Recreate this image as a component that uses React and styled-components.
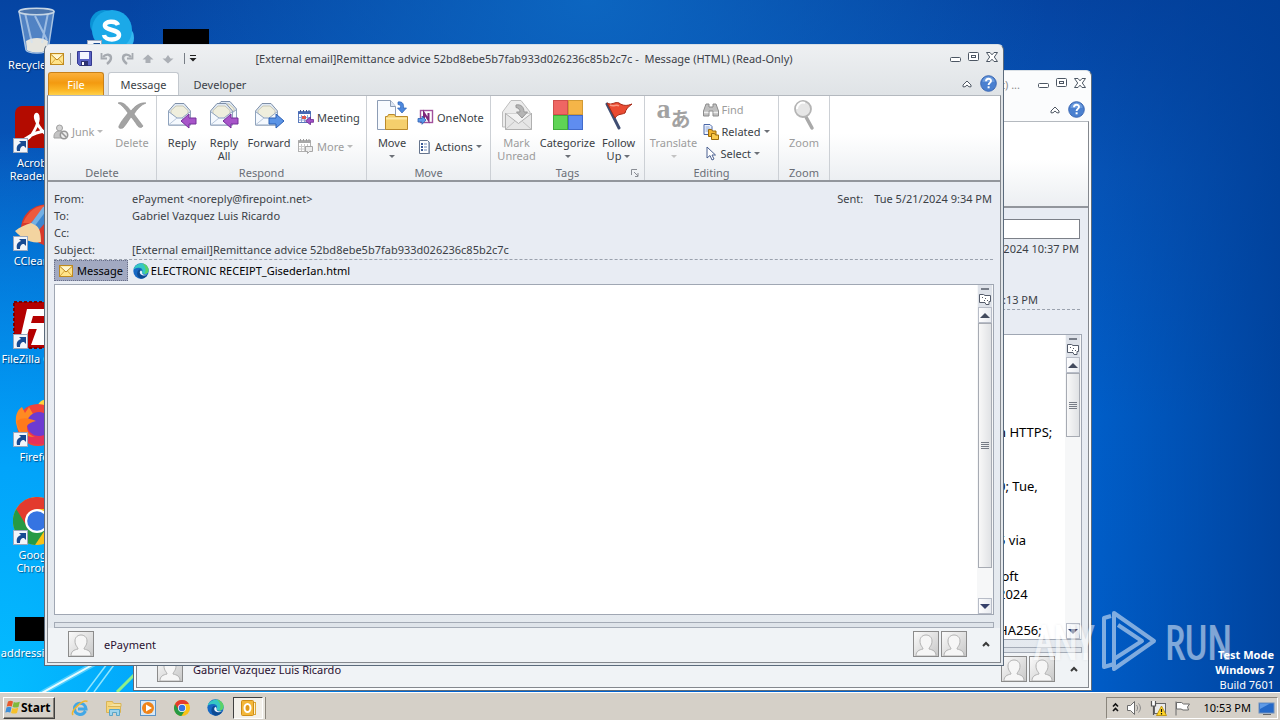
import React from 'react';
import styled, { createGlobalStyle } from 'styled-components';

const COLORS = {
  text: '#3b3f46',
  muted: '#9c9c9c',
  group: '#6a6e76',
  line: '#84888e',
  panel: '#e8ecf3',
  taskbar: '#d5d0c8',
};

const FONT = `'Noto Sans', 'Liberation Sans', sans-serif`;

const GlobalStyle = createGlobalStyle`
  * { box-sizing: border-box; }
  body { margin: 0; font-family: ${FONT}; font-size: 11px; color: ${COLORS.text}; overflow: hidden; }
  button, input { font: inherit; color: inherit; }
  button { padding: 0; border: 0; background: none; white-space: nowrap; }
  svg { display: block; flex: none; }
`;

/* ---------- icons ---------- */

const Envelope = () => (
  <svg width="14" height="12" viewBox="0 0 14 12">
    <rect x=".5" y=".5" width="13" height="11" fill="#ffe48a" stroke="#c08a1e" />
    <path d="M1 11l4.500-5M13 11L8.500 6" stroke="#d9a63a" fill="none" />
    <path d="M1 1.500l6 5.500 6-5.500" fill="#fff6d2" stroke="#b9841c" />
  </svg>
);

const Save = () => (
  <svg width="15" height="15" viewBox="0 0 15 15">
    <path d="M.5 .5h14v14h-12l-2-2z" fill="#5a62c4" stroke="#34398f" />
    <rect x="3" y="1" width="9" height="7" fill="#f4f6ff" />
    <rect x="4" y="10" width="7" height="5" fill="#2e3270" />
    <rect x="5" y="11" width="2" height="3" fill="#fff" />
  </svg>
);

const Undo = ({ flip }) => (
  <svg width="13" height="13" viewBox="0 0 13 13">
    <g transform={flip ? 'translate(13 0) scale(-1 1)' : undefined} fill="none" stroke="#a6aab0">
      <path d="M3 5C6 1.500 11 2 11 6c0 3-2 4.500-4 6" strokeWidth="2.400" />
      <path d="M1.500 1v5.500h5.500" strokeWidth="1.800" />
    </g>
  </svg>
);

const Diamond = ({ down }) => (
  <svg width="12" height="10" viewBox="0 0 12 10">
    <path
      d={down ? 'M6 9.500L.5 4.500h3L6 1l2.500 3.500h3z' : 'M6 .5l5.500 5h-3V9h-5V5.500h-3z'}
      fill="#abafb5"
    />
  </svg>
);

const Caret = ({ color = '#6c7077', size = 6 }) => (
  <svg width={size} height="3" viewBox="0 0 6 3"><path d="M0 0h6L3 3z" fill={color} /></svg>
);

const Customize = () => (
  <svg width="8" height="7" viewBox="0 0 8 7"><path d="M1 0h6v1H1zM.5 3h7L4 6.500z" fill="#222" /></svg>
);

const Minimize = () => (
  <svg width="11" height="12" viewBox="0 0 11 12"><rect x=".5" y="6.500" width="10" height="4" rx="1" fill="#fff" stroke="#4c5663" /></svg>
);

const Maximize = () => (
  <svg width="11" height="12" viewBox="0 0 11 12">
    <rect x=".5" y="1.500" width="10" height="8" rx="1" fill="#fff" stroke="#4c5663" />
    <rect x="3.500" y="4.500" width="4" height="2" fill="none" stroke="#4c5663" />
  </svg>
);

const CloseX = () => (
  <svg width="12" height="12" viewBox="0 0 12 12">
    <path d="M.5 1.500h3.500L6 3.800 8 1.500h3.500L8.300 6l3.200 4.500H8L6 8.200 4 10.500H.5L3.700 6z" fill="#fff" stroke="#4c5663" />
  </svg>
);

const Collapse = () => (
  <svg width="10" height="8" viewBox="0 0 10 8"><path d="M5 1l4 4v1.800H7L5 5 3 6.800H1V5z" fill="#fff" stroke="#4f5864" /></svg>
);

const Help = () => (
  <svg width="17" height="17" viewBox="0 0 17 17">
    <circle cx="8.500" cy="8.500" r="7.800" fill="#4a80d0" stroke="#3c68b3" />
    <path d="M2.500 7a6 5.500 0 0 1 12 0z" fill="#7ba6e3" opacity=".7" />
    <path d="M6 6.300c0-3.300 5-3.300 5-.3 0 1.900-2.400 1.900-2.400 4" fill="none" stroke="#fff" strokeWidth="1.900" />
    <rect x="7.600" y="11.300" width="2" height="2" fill="#fff" />
  </svg>
);

const Junk = () => (
  <svg width="16" height="16" viewBox="0 0 16 16">
    <circle cx="6.500" cy="4" r="3" fill="#d4d4d4" stroke="#9f9f9f" />
    <path d="M1 14c-.5-5 2-7 5.500-7s5 2 5 7z" fill="#c4c4c4" stroke="#a2a2a2" />
    <circle cx="11" cy="11" r="3.700" fill="#eee" stroke="#979797" strokeWidth="1.600" />
    <path d="M8.500 8.500l5 5" stroke="#979797" strokeWidth="1.600" />
  </svg>
);

const DeleteX = () => (
  <svg width="32" height="32" viewBox="0 0 32 32">
    <path d="M2 4c5-2 9 3 13 8 4-5 9-9 15-8-5 2-9 6-12 11 3 4 6 8 9 12-2 3-5 1-6-1-2-3-4-6-6-8-3 4-5 8-8 11-3 1-5 0-4-2 2-5 6-9 9-13C9 10 6 6 2 4z" fill="#a3a3a3" stroke="#8d8d8d" strokeWidth=".6" />
  </svg>
);

const OpenMail = ({ x = 0, y = 0 }) => (
  <g transform={`translate(${x} ${y})`} strokeLinejoin="round">
    <path d="M.5 9L7 1.500h9L22.500 9v14H.5z" fill="#dfe9f5" stroke="#7f90a8" />
    <path d="M3 13V8.500l5-4.500h7l5 4.500V13l-6 4H9z" fill="#efeedd" stroke="#c9c7b4" />
    <path d="M.5 9.500L9 16h5l8.500-6.500V23H.5z" fill="#f5f9fe" stroke="#8fa3bd" />
    <path d="M1 22.500l8-6.500h5l8 6.500" fill="none" stroke="#b9c8dc" />
  </g>
);

const Reply = ({ all, forward }) => (
  <svg width="32" height="32" viewBox="0 0 32 32">
    {all && <OpenMail x={6} y={1} />}
    <OpenMail x={2} y={3} />
    {forward ? (
      <path d="M16 19h7v-4l8 7-8 7v-4h-7z" fill="#5b94e6" stroke="#2d60b3" />
    ) : (
      <path d="M30 19h-7v-4l-8 7 8 7v-4h7z" fill="#a855c9" stroke="#75309a" />
    )}
  </svg>
);

const Meeting = ({ grey }) => (
  <svg width="17" height="16" viewBox="0 0 17 16">
    <rect x="1.500" y="2.500" width="12" height="11" fill="#fff" stroke={grey ? '#b0b0b0' : '#5b7bbd'} />
    <path d="M1 4h13" stroke={grey ? '#a8a8a8' : '#4769b5'} strokeWidth="2" />
    <path d="M3.500 1v2M6.500 1v2M9.500 1v2M12 1v2" stroke={grey ? '#999' : '#3c5390'} />
    <path d="M4.500 6v7M7.500 6v7M10.500 6v7M2 8.500h11M2 11h11" stroke={grey ? '#cacaca' : '#8fa8d8'} />
    {grey ? (
      <path d="M8.500 8.500h7v5h-3l-2 2v-2h-2z" fill="#ececec" stroke="#a6a6a6" />
    ) : (
      <>
        <rect x="5" y="7" width="4" height="3" fill="#e2574b" />
        <path d="M16.500 10.500h-3V8l-5 4 5 3.800v-2.500h3z" fill="#a04fc4" stroke="#6d2d92" strokeWidth=".8" />
      </>
    )}
  </svg>
);

const Move = () => (
  <svg width="32" height="32" viewBox="0 0 32 32">
    <path d="M1.500 1.500h13l5 6v23h-18z" fill="#f8fbff" stroke="#8d9db5" />
    <path d="M14.500 1.500v6h5" fill="#dce6f3" stroke="#8d9db5" />
    <path d="M22 3c5-1 6 3 5.500 6h3l-4.500 5-4.500-5h3c.5-2-.5-3.500-2.500-3.500z" fill="#4d88de" stroke="#2c62b5" strokeWidth=".7" />
    <path d="M9.500 30.500v-13h2l1-2h6l1 2h12v13z" fill="#f5cf6c" stroke="#bb8a2b" />
    <path d="M10 19.500h21" stroke="#fdeaa9" strokeWidth="2" />
  </svg>
);

const OneNote = () => (
  <svg width="17" height="16" viewBox="0 0 17 16">
    <rect x="3.500" y="1.500" width="12" height="12" fill="#fff" stroke="#a2519c" strokeWidth="1.400" />
    <path d="M7 11V4l4.500 7V4" fill="none" stroke="#80267a" strokeWidth="2" />
    <path d="M1 9.500h4V7l4 4-4 4.300V13H1z" fill="#5c97e8" stroke="#2d5fae" strokeWidth=".8" />
  </svg>
);

const Actions = () => (
  <svg width="15" height="15" viewBox="0 0 15 15">
    <path d="M2.500 1.500h8l2 2v11h-10z" fill="#fff" stroke="#66758d" />
    <path d="M12 3v11.500" stroke="#8999b3" strokeWidth="1.500" />
    <rect x="4" y="4" width="2" height="2" fill="#3c5b96" />
    <rect x="4" y="7" width="2" height="2" fill="#3c5b96" />
    <rect x="4" y="10" width="2" height="2" fill="#3c5b96" />
    <path d="M7 5h3M7 8h3M7 11h3" stroke="#6f89b8" />
  </svg>
);

const MarkUnread = () => (
  <svg width="32" height="32" viewBox="0 0 32 32">
    <path d="M1.500 13L10 1.500h10L29 13v15h-27.500z" fill="#ececec" stroke="#bebebe" />
    <rect x="4.500" y="14.500" width="26" height="16" fill="#e6e6e6" stroke="#b0b0b0" />
    <path d="M4.500 30.500l9-8M30.500 30.500l-9-8" stroke="#c2c2c2" />
    <path d="M4.500 14.500l13 10 13-10" fill="#f3f3f3" stroke="#b0b0b0" />
    <path d="M15 6c5-1 8 2 8 7h3.500L21 19l-5.500-6H19c0-2-1-4-4-4.500z" fill="#b5b5b5" stroke="#979797" />
  </svg>
);

const Categorize = () => (
  <svg width="32" height="32" viewBox="0 0 32 32">
    <rect x="1.500" y="1.500" width="14" height="14" fill="#ef6663" stroke="#d0504d" />
    <rect x="16.500" y="1.500" width="14" height="14" fill="#f5b548" stroke="#d29a35" />
    <rect x="1.500" y="16.500" width="14" height="14" fill="#5fd455" stroke="#41ac3a" />
    <rect x="16.500" y="16.500" width="14" height="14" fill="#5f8df0" stroke="#426bcb" />
  </svg>
);

const Flag = () => (
  <svg width="32" height="32" viewBox="0 0 32 32">
    <path d="M4 5l12 24" stroke="#3f4e72" strokeWidth="3" strokeLinecap="round" />
    <path d="M4 4c5 3 8-2 12 0 4 3 8 3 13 1-4 3-6 5-7 9-4 2-6 0-10 5z" fill="#ea4b32" stroke="#a52a18" />
    <path d="M7 6c4 2 6-1 9 1" stroke="#f99a84" strokeWidth="1.500" fill="none" />
  </svg>
);

const LauncherIcon = () => (
  <svg width="8" height="8" viewBox="0 0 8 8"><path d="M.5 6V.5H6M3 3l4 4M7 4v3.500H4" fill="none" stroke="#8a8e95" /></svg>
);

const Find = () => (
  <svg width="16" height="14" viewBox="0 0 16 14">
    <path d="M3 1h3v3h4V1h3l2.500 7v5H10V8H6v5H.5V8z" fill="#bfbfbf" stroke="#8c8c8c" />
    <path d="M1 9.500h4.500M10.500 9.500H15" stroke="#eee" strokeWidth="1.500" />
  </svg>
);

const Related = () => (
  <svg width="16" height="16" viewBox="0 0 16 16">
    <path d="M1 .5h6l2 2v8H1z" fill="#eef4ff" stroke="#4b67a6" />
    <path d="M2.500 3h4M2.500 5h5M2.500 7h5" stroke="#8ba4d6" />
    <path d="M5.500 12.500v-7h3l1 1.500h3.500v5.500z" fill="#f3b52f" stroke="#9b6a0a" />
    <path d="M8.500 15.500v-6h3l1 1.500h3v4.500z" fill="#fbcb4d" stroke="#9b6a0a" />
  </svg>
);

const Pointer = () => (
  <svg width="15" height="15" viewBox="0 0 15 15"><path d="M4 1v11l3-2.500L9 14l2-1-2-4h3.500z" fill="#fff" stroke="#4a6091" /></svg>
);

const Magnifier = () => (
  <svg width="32" height="32" viewBox="0 0 32 32">
    <path d="M18 18l6 11" stroke="#a9a9a9" strokeWidth="3.500" strokeLinecap="round" />
    <circle cx="15" cy="10" r="8" fill="#e6e6e6" stroke="#b4b4b4" strokeWidth="1.800" />
    <path d="M9 10a6 6 0 0 1 8-6" fill="none" stroke="#fff" strokeWidth="2" />
  </svg>
);

const Person = () => (
  <svg width="24" height="24" viewBox="0 0 24 24">
    <path d="M2 24c0-5 3-6 7-7 0-2-3-3-3-8 0-8 12-8 12 0 0 5-3 6-3 8 4 1 7 2 7 7z" fill="#f6f6f6" stroke="#b2b2b2" />
  </svg>
);

const Chevron = () => (
  <svg width="8" height="6" viewBox="0 0 8 6"><path d="M1 5l3-3 3 3" fill="none" stroke="#3a3a3a" strokeWidth="2" /></svg>
);

const SplitIcon = () => (
  <svg width="12" height="12" viewBox="0 0 12 12">
    <path d="M.5 1.500h4l1.500 1h5.500v6H10v3H7l-1-2H.5z" fill="#fff" stroke="#555c6b" />
    <path d="M3 4l1 1M6 5l1 1M5 7l1 1M8 7l1 1" stroke="#555c6b" />
  </svg>
);

const EdgeIcon = ({ size }) => (
  <svg width={size} height={size} viewBox="0 0 16 16">
    <circle cx="8" cy="8" r="7.700" fill="#1769c4" />
    <path d="M.6 6.500C2-.5 13-2 15.500 6c.8 3-1 5-4 5-2 0-3-1-2.500-2 1.500-2-.5-4.500-3.500-4.200C3 5 1 6 .6 6.500z" fill="#35c7c4" />
    <path d="M9 .4C13 .9 16 4 15.600 7.500c-.4 2.500-2 3.500-4.200 3.500 2-3 1.600-8-2.400-10.600z" fill="#5bd268" />
    <path d="M9 9.500c-.5 2 2 3.500 5.500 2-1 2.500-4 4.200-6.500 4.200-4-1-5-6-2.500-8.500C6 6 8 6.500 8.500 8z" fill="#0d4b94" />
    <path d="M9 9.400c.2-1-.3-2-1.300-1.900-2 1.500-.5 5 3 4.900 1.500 0 2.800-.3 3.800-.9-3 .7-5.500 0-5.500-2.100z" fill="#e8f4ff" />
  </svg>
);

const ChromeIcon = ({ size }) => (
  <svg width={size} height={size} viewBox="0 0 48 48">
    <circle cx="24" cy="24" r="24" fill="#fbc116" />
    <path d="M24 24L3.200 12A24 24 0 0 0 22 48l12-18z" fill="#269a45" />
    <path d="M24 12h20.800A24 24 0 0 0 3.200 12l11 18z" fill="#e33b2e" />
    <circle cx="24" cy="24" r="12" fill="#fff" />
    <circle cx="24" cy="24" r="9.800" fill="#3574e2" />
  </svg>
);

const Shortcut = () => (
  <g transform="translate(0 33)">
    <rect x=".5" y=".5" width="14" height="14" fill="#f2f5fa" stroke="#9aa7bd" />
    <path d="M4 13c-1-5 1-7 4-8L6 3h7v7l-2-2c-3 0-4 2-4 5z" fill="#174a92" />
  </g>
);

const DesktopGlyph = ({ kind }) => (
  <svg width="48" height="48" viewBox="0 0 48 48">
    {kind === 'bin' && (
      <>
        <path d="M6 4h35l-6 39c-2 4-20 4-22 0z" fill="#8fb4dd" opacity=".55" />
        <path d="M13 34c6-4 16-4 22 0l-1 9c-3 3-17 3-20 0z" fill="#e5e5df" />
        <path d="M12 6l7 30M35 6l-6 30M22 9l12 24" stroke="#cfe2f7" opacity=".6" strokeWidth="2" />
        <path d="M6 4l7 39c2 4 20 4 22 0l6-39" fill="none" stroke="#a9c4e2" strokeWidth="1.500" />
        <ellipse cx="23.500" cy="4.500" rx="17.500" ry="3.200" fill="#4d76ad" stroke="#c6d5e4" strokeWidth="1.500" />
      </>
    )}
    {kind === 'acrobat' && (
      <>
        <rect x="2" y="1" width="46" height="42" rx="7" fill="#b30b00" />
        <path d="M12 34c5 2 15-16 13-23-1-4-4-1-2 4 3 9 9 15 15 16 6 0 3-5-3-5-8 0-16 3-23 8z" fill="none" stroke="#fff" strokeWidth="2.800" />
      </>
    )}
    {kind === 'ccleaner' && (
      <>
        <path d="M8 24C10 8 24-2 46 2v38c-8 4-14 3-20 0z" fill="#d8392b" />
        <path d="M10 20C15 8 24 2 34 2L20 20z" fill="#ee5a3d" />
        <path d="M36 0L16 22l9 6L44 6z" fill="#3d86cf" />
        <path d="M30 4L17 22l4 2L36 4z" fill="#74b0e4" />
        <path d="M18 20c-6 2-11 4-16 8 6 7 16 13 26 11 0-8-1-15-6-17z" fill="#f3d4a0" />
      </>
    )}
    {kind === 'filezilla' && (
      <>
        <rect x="1" y="1" width="46" height="46" fill="#b40000" stroke="#7a0000" strokeWidth="2" strokeDasharray="3 2" />
        <path d="M14 8h26l-2 7H20l-2 7h12l-2 6H16l-3 10H7z" fill="#fff" />
        <path d="M26 22h20l-2 6-13 10h12v6H18z" fill="#fff" />
      </>
    )}
    {kind === 'firefox' && (
      <>
        <path d="M23 12C24 4 29 0 33 1l9 12-6 16z" fill="#ffd43b" />
        <circle cx="25" cy="26" r="21" fill="#f0433a" />
        <path d="M3 24C2 14 6 10 9 8l3 6 4-6 4 7c10-2 22 2 26 12-4 18-26 22-35 12-4-4-7-9-8-15z" fill="#ff8a22" />
        <path d="M7 35c6 13 29 15 37-1l-12-4-18-4z" fill="#e6315a" />
        <circle cx="26" cy="25" r="12" fill="#6d3bd1" />
        <path d="M4 22c6-5 14-2 19 0-5 1-8 3-9 5 0 6 2 9 8 11C10 38 4 30 4 22z" fill="#ff7a1a" />
      </>
    )}
    {kind === 'skype' && (
      <>
        <circle cx="17" cy="17" r="14" fill="#0b93d6" />
        <circle cx="33" cy="31" r="14" fill="#35b8f0" />
        <circle cx="25" cy="23" r="20" fill="#1ba9e8" />
        <path d="M31 18c-2-5-14-4-13 1 1 5 14 3 14 9 0 6-14 6-15 0" fill="none" stroke="#fff" strokeWidth="4.500" />
      </>
    )}
    {kind === 'black' && <rect x="2" y="22" width="46" height="24" fill="#000" />}
    {kind !== 'bin' && kind !== 'black' && <Shortcut />}
  </svg>
);

const TaskIcon = ({ kind }) => {
  if (kind === 'chrome') return <ChromeIcon size={16} />;
  if (kind === 'edge') return <EdgeIcon size={17} />;
  return (
    <svg width="18" height="18" viewBox="0 0 18 18">
      {kind === 'ie' && (
        <>
          <path d="M14.500 12c-3 5.500-11 4-11-2.500s10.500-7.500 11.500.5H7" fill="none" stroke="#42a7e6" strokeWidth="3" />
          <path d="M2 16C-1 12 12 0 16.500 2.500" fill="none" stroke="#f0b62c" strokeWidth="1.600" />
        </>
      )}
      {kind === 'explorer' && (
        <>
          <path d="M1.500 2.500h6l1 2h7v9h-14z" fill="#f6d67c" stroke="#d9b455" />
          <path d="M3 7.500h13v-3H9" fill="#f3e3a2" stroke="#d9b455" />
          <path d="M4.500 16.500v-6h10v6h-3v-3h-4v3z" fill="#9fd4ec" stroke="#5ba6c8" />
        </>
      )}
      {kind === 'player' && (
        <>
          <rect x="1.500" y="1.500" width="15" height="15" fill="#d7e8f7" stroke="#5b93c7" />
          <circle cx="9" cy="9" r="6" fill="#f08419" />
          <path d="M7 5.500l6 3.500-6 3.500z" fill="#fff" />
        </>
      )}
      {kind === 'outlook' && (
        <>
          <rect x="8.500" y="3.500" width="8" height="12" fill="#fdf3cf" stroke="#dda738" />
          <rect x="2.500" y="1.500" width="12" height="15" rx="1" fill="#f3b73a" stroke="#cf8d18" />
          <ellipse cx="8.500" cy="9" rx="3" ry="4" fill="#e09a1c" stroke="#fff" strokeWidth="2" />
        </>
      )}
    </svg>
  );
};

const WindowsLogo = () => (
  <svg width="16" height="15" viewBox="0 0 16 15">
    <path d="M3 1.500c2-1 3.500-.8 5 0L6.800 6.500C5 5.800 3.500 5.800 1.700 6.500z" fill="#e8592b" />
    <path d="M8.800 2c2 .8 3.500.8 6-.2L13.500 7c-2 .8-3.500.7-6-.1z" fill="#7fb93c" />
    <path d="M1.500 7.500c2-.9 3.500-.8 5 0L5.300 12.500c-1.800-.8-3.300-.8-5 0z" fill="#3d8fd9" />
    <path d="M7.300 8c2 .8 3.500.8 6-.2L12 13c-2 .8-3.500.7-6-.1z" fill="#f6c12c" />
  </svg>
);

const TrayIcon = ({ kind }) => (
  <svg width={kind === 'up' ? 7 : 17} height="16" viewBox={kind === 'up' ? '0 0 7 16' : '0 0 17 16'}>
    {kind === 'up' && <path d="M1 6.500l2.500-2.500L6 6.500M1 11l2.500-2.500L6 11" fill="none" stroke="#111" strokeWidth="1.600" />}
    {kind === 'sound' && (
      <>
        <path d="M1.500 5.500h3l4-4v13l-4-4h-3z" fill="#fff" stroke="#6b6b6b" />
        <path d="M10.500 5c1.500 2 1.500 4 0 6M12.500 3.500c2.500 3 2.500 6 0 9" fill="none" stroke="#888" />
      </>
    )}
    {kind === 'network' && (
      <>
        <rect x="4.500" y="3.500" width="11" height="10" fill="#e9e9e9" stroke="#666" />
        <path d="M1.500 1v5h4V1M3.500 6v9" stroke="#555" strokeWidth="1.200" fill="#fff" />
        <path d="M11.500 6l5 9.500h-10z" fill="#ffd428" stroke="#b58a00" strokeWidth=".8" />
        <path d="M11.500 9v3M11.500 13v1.500" stroke="#111" strokeWidth="1.200" />
      </>
    )}
    {kind === 'flag' && <path d="M2 15.500V1.500M2.500 2.500h5l2 1.500h6l-2 3 1 3H9l-2-1H2.500z" fill="#fff" stroke="#6b6b6b" />}
    {kind === 'screen' && (
      <>
        <rect x="1" y="3" width="15" height="10" fill="#2469c8" stroke="#6d8fbd" />
        <path d="M2 9L12 3.500H2z" fill="#5e9ae6" />
        <path d="M5 14.500h8" stroke="#666" />
      </>
    )}
  </svg>
);

/* ---------- window parts ---------- */

const QuickAccess = () => (
  <QuickBar>
    <Envelope />
    <QuickDivider />
    <IconButton aria-label="Save"><Save /></IconButton>
    <IconButton aria-label="Undo"><Undo /></IconButton>
    <IconButton aria-label="Redo"><Undo flip /></IconButton>
    <IconButton aria-label="Previous item"><Diamond /></IconButton>
    <IconButton aria-label="Next item"><Diamond down /></IconButton>
    <QuickMenu aria-label="Customize"><Customize /></QuickMenu>
  </QuickBar>
);

const Large = ({ icon, label, second, caret, disabled, width }) => (
  <LargeButton $width={width} disabled={disabled}>
    {icon}
    <LargeLabel>{label}</LargeLabel>
    <LargeSecond>
      {second}
      {caret && <Caret color={disabled ? '#c3c3c3' : undefined} />}
    </LargeSecond>
  </LargeButton>
);

const Small = ({ icon, label, caret, disabled }) => (
  <SmallButton disabled={disabled}>
    {icon}
    {label}
    {caret && <Caret color={disabled ? '#b9b9b9' : undefined} />}
  </SmallButton>
);

const Ribbon = () => (
  <>
    <Group $width={109}>
      <GroupBody>
        <SmallStack $width={60}><Small icon={<Junk />} label="Junk" caret disabled /></SmallStack>
        <Large icon={<DeleteX />} label="Delete" width={46} disabled />
      </GroupBody>
      <GroupName>Delete</GroupName>
    </Group>
    <Group $width={210}>
      <GroupBody $start>
        <Large icon={<Reply />} label="Reply" width={42} />
        <Large icon={<Reply all />} label="Reply" second="All" width={42} />
        <Large icon={<Reply forward />} label="Forward" width={48} />
        <SmallStack $width={68}>
          <Small icon={<Meeting />} label="Meeting" />
          <Small icon={<Meeting grey />} label="More" caret disabled />
        </SmallStack>
      </GroupBody>
      <GroupName>Respond</GroupName>
    </Group>
    <Group $width={124}>
      <GroupBody $start>
        <Large icon={<Move />} label="Move" caret width={42} />
        <SmallStack $width={74}>
          <Small icon={<OneNote />} label="OneNote" />
          <Small icon={<Actions />} label="Actions" caret />
        </SmallStack>
      </GroupBody>
      <GroupName>Move</GroupName>
    </Group>
    <Group $width={154}>
      <GroupBody>
        <Large icon={<MarkUnread />} label="Mark" second="Unread" width={44} disabled />
        <Large icon={<Categorize />} label="Categorize" caret width={58} />
        <Large icon={<Flag />} label="Follow" second="Up" caret width={44} />
      </GroupBody>
      <GroupName>Tags<Launcher aria-label="Tag options"><LauncherIcon /></Launcher></GroupName>
    </Group>
    <Group $width={134}>
      <GroupBody>
        <Large icon={<TranslateGlyph><i>a</i><b>あ</b></TranslateGlyph>} label="Translate" caret width={50} disabled />
        <SmallStack $width={76} $tight>
          <Small icon={<Find />} label="Find" disabled />
          <Small icon={<Related />} label="Related" caret />
          <Small icon={<Pointer />} label="Select" caret />
        </SmallStack>
      </GroupBody>
      <GroupName>Editing</GroupName>
    </Group>
    <Group $width={51}>
      <GroupBody><Large icon={<Magnifier />} label="Zoom" width={44} disabled /></GroupBody>
      <GroupName>Zoom</GroupName>
    </Group>
  </>
);

const MailWindow = ({ inactive, title, ribbon, fields, attachments, lines, thumb, person, children }) => (
  <Frame $inactive={inactive}>
    <TitleBar>
      <QuickAccess />
      <Title $inactive={inactive}>{title}</Title>
      <Controls $inactive={inactive}>
        <IconButton aria-label="Minimize"><Minimize /></IconButton>
        <IconButton aria-label="Maximize"><Maximize /></IconButton>
        <IconButton aria-label="Close"><CloseX /></IconButton>
      </Controls>
    </TitleBar>
    <Tabs>
      <FileTab>File</FileTab>
      <Tab $active>Message</Tab>
      <Tab>Developer</Tab>
      <TabTools>
        <IconButton aria-label="Minimize the ribbon"><Collapse /></IconButton>
        <IconButton aria-label="Help"><Help /></IconButton>
      </TabTools>
    </Tabs>
    <Client>
      <RibbonBar>{ribbon}</RibbonBar>
      {children}
      <Fields>{fields}</Fields>
      <Attachments>{attachments}</Attachments>
      <Reading>
        <Page>{lines.map((line, i) => <PageLine key={i}>{line}</PageLine>)}</Page>
        <ScrollBar>
          <SplitBox><SplitIcon /></SplitBox>
          <ArrowButton aria-label="Scroll up"><svg width="10" height="5" viewBox="0 0 10 5"><path d="M0 5l5-5 5 5z" fill="#434b5e" /></svg></ArrowButton>
          <Track>
            <Thumb $length={thumb}><Grip /></Thumb>
          </Track>
          <ArrowButton aria-label="Scroll down"><svg width="10" height="5" viewBox="0 0 10 5"><path d="M0 0h10L5 5z" fill="#36416b" /></svg></ArrowButton>
        </ScrollBar>
      </Reading>
      <Splitter />
      <People>
        <Avatar><Person /></Avatar>
        <PersonName>{person}</PersonName>
        <PeopleTools>
          <Avatar><Person /></Avatar>
          <Avatar><Person /></Avatar>
          <ExpandButton aria-label="Expand"><Chevron /></ExpandButton>
        </PeopleTools>
      </People>
    </Client>
  </Frame>
);

const ICONS = [
  ['bin', 'Recycle Bin'],
  ['acrobat', 'Acrobat Reader DC'],
  ['ccleaner', 'CCleaner'],
  ['filezilla', 'FileZilla Client'],
  ['firefox', 'Firefox'],
  ['chrome', 'Google Chrome'],
  ['black', 'addressing.rtf'],
  ['skype', 'Skype'],
];

const HEADER_LINES = ['n HTTPS;', '', '', '0; Tue,', '', '', '5 via', '', ' oft', '2024', '', 'HA256;'];

const App = () => (
  <Screen>
    <GlobalStyle />
    <Desktop>
      <Streaks viewBox="0 0 260 60" width="260" height="60">
        <path d="M40 62L130 12" stroke="#7fe0ff" strokeWidth="5" opacity=".6" />
        <path d="M40 62L130 12" stroke="#e4fbff" strokeWidth="2" />
        <path d="M86 60l30-40M94 60l28-38" stroke="#8fe6ff" strokeWidth="1.500" />
        <path d="M117 60l28-28" stroke="#8ef08a" strokeWidth="3" />
      </Streaks>
      <IconGrid>
        {ICONS.map(([kind, label]) => (
          <DesktopIcon key={kind}>
            {kind === 'chrome' ? <ChromeShortcut><ChromeIcon size={48} /><svg width="48" height="48" viewBox="0 0 48 48"><Shortcut /></svg></ChromeShortcut> : <DesktopGlyph kind={kind} />}
            {label}
          </DesktopIcon>
        ))}
        <DesktopIcon $firstRow><DesktopGlyph kind="black" /></DesktopIcon>
      </IconGrid>
      <Place $left={133} $top={70} $right={188} $bottom={1}>
        <MailWindow
          inactive
          title="- Message (HTML) (Read-Only, Plain Text) ..."
          fields={(
            <>
              <Row $end>Sent: Tue 5/21/2024 10:37 PM</Row>
              <Row />
              <Row />
              <Row $end $inset>10:13 PM</Row>
            </>
          )}
          lines={HEADER_LINES}
          thumb={64}
          person="Gabriel Vazquez Luis Ricardo"
        >
          <InfoInput aria-label="Information" readOnly />
        </MailWindow>
      </Place>
      <Place $left={44} $top={44} $right={276} $bottom={26}>
        <MailWindow
          title="[External email]Remittance advice 52bd8ebe5b7fab933d026236c85b2c7c -  Message (HTML) (Read-Only)"
          ribbon={<Ribbon />}
          fields={(
            <>
              <Row>
                <Label>From:</Label>ePayment &lt;noreply@firepoint.net&gt;
                <Sent><span>Sent:</span><span>Tue 5/21/2024 9:34 PM</span></Sent>
              </Row>
              <Row><Label>To:</Label>Gabriel Vazquez Luis Ricardo</Row>
              <Row><Label>Cc:</Label></Row>
              <Row><Label>Subject:</Label>[External email]Remittance advice 52bd8ebe5b7fab933d026236c85b2c7c</Row>
            </>
          )}
          attachments={(
            <>
              <MessageTab><Envelope />Message</MessageTab>
              <Attachment><EdgeIcon size={16} />ELECTRONIC RECEIPT_GisederIan.html</Attachment>
            </>
          )}
          lines={[]}
          thumb={245}
          person="ePayment"
        />
      </Place>
      <Watermark>
        ANY
        <svg width="58" height="64" viewBox="0 0 58 64">
          <path d="M11 7L4 9v49l10-3V17M14 30V4l40 28-40 28V50l28-18-24-16" fill="none" stroke="#fff" strokeWidth="4" strokeLinejoin="round" />
        </svg>
        RUN
      </Watermark>
      <Build><b>Test Mode</b><b>Windows 7</b><span>Build 7601</span></Build>
    </Desktop>
    <Taskbar>
      <StartButton><WindowsLogo />Start</StartButton>
      <Launchers>
        {['ie', 'explorer', 'player', 'chrome', 'edge'].map(kind => (
          <TaskButton key={kind} aria-label={kind}><TaskIcon kind={kind} /></TaskButton>
        ))}
        <TaskButton $pressed aria-label="outlook"><TaskIcon kind="outlook" /></TaskButton>
      </Launchers>
      <Tray>
        <TrayIcon kind="up" />
        <TrayIcon kind="sound" />
        <TrayIcon kind="network" />
        <TrayIcon kind="flag" />
        <Clock>10:53 PM</Clock>
        <TrayIcon kind="screen" />
      </Tray>
    </Taskbar>
  </Screen>
);

const Screen = styled.div`
  display: flex;
  flex-direction: column;
  height: 100vh;
`;

const Desktop = styled.main`
  position: relative;
  flex: 1;
  overflow: hidden;
  background:
    radial-gradient(ellipse 420px 560px at 0 100%, #04bdff 0, #02a4fa 40%, rgba(2, 140, 240, 0) 100%),
    radial-gradient(ellipse 460px 300px at 46% 0, rgba(14, 110, 200, .8) 0, rgba(14, 110, 200, 0) 100%),
    linear-gradient(90deg, rgba(0, 62, 150, 0) 82%, rgba(0, 62, 150, .85) 100%),
    linear-gradient(180deg, #0544a2 0, #0757bc 25%, #0064d2 60%, #0062d0 100%);
`;

const Streaks = styled.svg`
  position: absolute;
  left: 0;
  bottom: 0;
`;

const IconGrid = styled.div`
  display: grid;
  grid-template-rows: repeat(7, 98px);
  grid-auto-columns: 74px;
  grid-auto-flow: column;
  padding-top: 7px;
`;

const DesktopIcon = styled.div`
  display: flex;
  flex-direction: column;
  align-items: center;
  gap: 3px;
  line-height: 13px;
  text-align: center;
  color: #fff;
  text-shadow: 1px 1px 1px rgba(0, 20, 60, .6);
  ${props => props.$firstRow && 'grid-row: 1; grid-column: 3;'}
`;

const ChromeShortcut = styled.span`
  display: grid;
  svg { grid-area: 1 / 1; }
`;

const Place = styled.div`
  position: absolute;
  left: ${props => props.$left}px;
  top: ${props => props.$top}px;
  right: ${props => props.$right}px;
  bottom: ${props => props.$bottom}px;
`;

const Frame = styled.section`
  display: flex;
  flex-direction: column;
  height: 100%;
  padding: 0 2px 2px 2px;
  border: 1px solid #5c6b7c;
  border-top-color: #d9e0e6;
  border-radius: 6px 6px 0 0;
  background: ${props => (props.$inactive ? '#fbfcfd' : 'linear-gradient(#eef0f2 0, #dfe3e6 51px, #e6eaee 100%)')};
`;

const TitleBar = styled.header`
  display: flex;
  align-items: center;
  height: 27px;
`;

const QuickBar = styled.div`
  display: flex;
  flex: 1;
  align-items: center;
  gap: 8px;
  padding-left: 3px;
`;

const QuickDivider = styled.span`
  width: 1px;
  height: 12px;
  margin: 0 -2px;
  background: #8d949c;
`;

const QuickMenu = styled.button`
  margin-left: 2px;
  padding: 2px 0 2px 4px;
  border-left: 1px solid #777d85;
`;

const IconButton = styled.button`
  display: block;
`;

const Title = styled.span`
  white-space: pre;
  color: ${props => (props.$inactive ? '#8b8b8b' : '#3d4148')};
`;

const Controls = styled.div`
  display: flex;
  flex: ${props => (props.$inactive ? 'none' : '1')};
  justify-content: flex-end;
  gap: 7px;
  padding: 0 3px 4px ${props => (props.$inactive ? 18 : 0)}px;
`;

const Tabs = styled.nav`
  display: flex;
  height: 23px;
  padding: 0 1px;
`;

const Tab = styled.button`
  width: ${props => (props.$active ? 71 : 82)}px;
  border: 1px solid ${props => (props.$active ? '#c3c8ce' : 'transparent')};
  border-bottom: 0;
  border-radius: 3px 3px 0 0;
  background: ${props => (props.$active ? '#fff' : 'none')};
`;

const FileTab = styled(Tab)`
  width: 56px;
  margin-right: 4px;
  border-color: #c8811a;
  background: linear-gradient(#fbb03c 0, #f39a10 45%, #fcb827 80%, #fed04a 100%);
  color: #fff;
`;

const TabTools = styled.div`
  display: flex;
  flex: 1;
  align-items: center;
  justify-content: flex-end;
  gap: 8px;
  padding-right: 3px;
`;

const Client = styled.div`
  display: flex;
  flex: 1;
  flex-direction: column;
  min-height: 0;
  border: 1px solid ${COLORS.line};
  border-top-color: #b4b9bf;
  background: linear-gradient(${COLORS.panel} 0, ${COLORS.panel} 50%, #e4e9ee 100%);
`;

const RibbonBar = styled.div`
  display: flex;
  flex: none;
  height: 86px;
  border-bottom: 2px solid #92969c;
  background: linear-gradient(#fff 0, #fff 45%, #eceff2 100%);
`;

const Group = styled.div`
  display: flex;
  flex-direction: column;
  width: ${props => props.$width}px;
  border-right: 1px solid #ccd0d5;
`;

const GroupBody = styled.div`
  display: flex;
  flex: 1;
  justify-content: ${props => (props.$start ? 'flex-start' : 'center')};
  padding: 3px 0 0 ${props => (props.$start ? 4 : 0)}px;
`;

const GroupName = styled.div`
  display: flex;
  align-items: center;
  justify-content: center;
  position: relative;
  height: 16px;
  color: ${COLORS.group};
`;

const Launcher = styled.button`
  position: absolute;
  right: 5px;
  bottom: 3px;
`;

const LargeButton = styled.button`
  display: flex;
  flex-direction: column;
  align-items: center;
  width: ${props => props.$width}px;
  color: ${props => (props.disabled ? COLORS.muted : COLORS.text)};
`;

const LargeLabel = styled.span`
  margin-top: 5px;
  line-height: 14px;
`;

const LargeSecond = styled.span`
  display: flex;
  align-items: center;
  gap: 3px;
  height: 12px;
  line-height: 12px;
`;

const TranslateGlyph = styled.span`
  display: flex;
  justify-content: center;
  width: 32px;
  height: 32px;
  color: #a2a2a2;
  i { font: bold 28px/20px 'Liberation Serif', serif; }
  b { align-self: flex-end; font: bold 20px/24px 'Noto Sans CJK JP', sans-serif; }
`;

const SmallStack = styled.div`
  display: flex;
  flex-direction: column;
  justify-content: center;
  gap: ${props => (props.$tight ? 6 : 13)}px;
  width: ${props => props.$width}px;
  padding-left: 4px;
`;

const SmallButton = styled.button`
  display: flex;
  align-items: center;
  gap: 3px;
  height: 16px;
  color: ${props => (props.disabled ? COLORS.muted : COLORS.text)};
`;

const InfoInput = styled.input`
  height: 20px;
  margin: 11px 8px 0 6px;
  border: 1px solid #7c8088;
  background: #fff;
`;

const Fields = styled.div`
  margin: 0 7px 0 6px;
  padding: 8px 0 1px;
  border-bottom: 1px dashed #9aa1ad;

  ${InfoInput} + & { padding-top: 1px; margin-right: 8px; }
`;

const Row = styled.div`
  display: flex;
  align-items: center;
  justify-content: ${props => (props.$end ? 'flex-end' : 'flex-start')};
  height: 17px;
  padding-right: ${props => (props.$inset ? 42 : 1)}px;
`;

const Label = styled.span`
  width: 78px;
`;

const Sent = styled.span`
  display: flex;
  gap: 11px;
  margin-left: auto;
`;

const Attachments = styled.div`
  display: flex;
  height: 24px;
  margin-left: 6px;
  padding-bottom: 3px;
  color: #000;
`;

const MessageTab = styled.button`
  display: flex;
  align-items: center;
  gap: 4px;
  padding: 0 4px;
  border: 1px dotted #6a7088;
  background: #a2a9c1;
`;

const Attachment = styled.button`
  display: flex;
  align-items: center;
  gap: 2px;
  padding-left: 5px;
`;

const Reading = styled.div`
  display: flex;
  flex: 1;
  min-height: 0;
  margin: 0 6px;
  border: 1px solid #a0a7b3;
  background: #fff;
`;

const Page = styled.div`
  flex: 1;
  padding-top: 88px;
  overflow: hidden;
`;

const PageLine = styled.div`
  width: 67px;
  height: 18px;
  margin-left: auto;
  font-size: 13px;
  line-height: 18px;
  white-space: pre;
  color: #000;
`;

const ScrollBar = styled.div`
  display: flex;
  flex-direction: column;
  width: 16px;
  padding: 0 1px;
  background: #f6f7f8;
`;

const SplitBox = styled.div`
  display: flex;
  align-items: flex-end;
  justify-content: center;
  height: 22px;
  padding-bottom: 2px;
  background: linear-gradient(#777d88, #777d88) center 3px / 8px 2px no-repeat #dee2e9;
`;

const ArrowButton = styled.button`
  display: flex;
  align-items: center;
  justify-content: center;
  height: 16px;
  border: 1px solid #b7bcc7;
  background: linear-gradient(90deg, #fdfdfe, #e8ebf0);
`;

const Track = styled.div`
  flex: 1;
`;

const Thumb = styled.div`
  display: flex;
  align-items: center;
  justify-content: center;
  height: ${props => props.$length}px;
  border: 1px solid #a7abb3;
  background: linear-gradient(90deg, #f8f8f8, #e0e2e5);
`;

const Grip = styled.span`
  width: 8px;
  height: 7px;
  background: repeating-linear-gradient(#777c86 0, #777c86 1px, transparent 1px, transparent 2px);
`;

const Splitter = styled.div`
  height: 6px;
  margin: 7px 6px 0;
  border: 1px solid #a4abb6;
  background: #dfe4ea;
`;

const People = styled.footer`
  display: flex;
  align-items: center;
  height: 34px;
  padding: 0 10px 2px 20px;
  background: #f0f3f6;
`;

const Avatar = styled.span`
  width: 26px;
  height: 26px;
  border: 1px solid #8b8b8b;
  background: linear-gradient(135deg, #fafafa, #c8c8c8);
`;

const PersonName = styled.span`
  margin-left: 10px;
  color: #2a1030;
`;

const PeopleTools = styled.div`
  display: flex;
  align-items: center;
  gap: 2px;
  margin-left: auto;
`;

const ExpandButton = styled.button`
  margin-left: 13px;
`;

const Build = styled.div`
  display: flex;
  flex-direction: column;
  position: absolute;
  right: 6px;
  bottom: 0;
  line-height: 15px;
  text-align: right;
  color: #fff;
`;

const Watermark = styled.div`
  display: flex;
  align-items: center;
  gap: 7px;
  position: absolute;
  right: 48px;
  bottom: 19px;
  font-family: 'Open Sans Condensed Light', 'Open Sans Condensed', 'Roboto Condensed', Roboto, sans-serif;
  font-size: 46px;
  font-weight: 300;
  line-height: 64px;
  color: #fff;
  -webkit-text-stroke: 2px #fff;
  text-shadow: 0 0 3px rgba(80, 90, 110, .6);
  opacity: .5;
`;

const Taskbar = styled.footer`
  display: flex;
  align-items: center;
  height: 28px;
  padding: 2px 2px 0 3px;
  border-top: 1px solid #fff;
  background: ${COLORS.taskbar};
  color: #000;
`;

const StartButton = styled.button`
  display: flex;
  align-items: center;
  height: 22px;
  padding: 0 3px 0 1px;
  border: 1px solid;
  border-color: #fff #404040 #404040 #fff;
  box-shadow: inset -1px -1px 0 #868179;
  font-size: 12px;
  font-weight: 700;
`;

const Launchers = styled.div`
  display: flex;
  align-items: center;
  margin-left: 8px;
`;

const TaskButton = styled.button`
  display: flex;
  align-items: center;
  justify-content: center;
  width: ${props => (props.$pressed ? 30 : 34)}px;
  height: 22px;
  border: 1px solid transparent;
  ${props => props.$pressed && `
    border-color: #404040 #fff #fff #404040;
    background: #f3f0ea;
    box-shadow: 2px 0 0 #e9e6df, 3px 0 0 #8a857c;
  `}
`;

const Tray = styled.div`
  display: flex;
  align-items: center;
  gap: 7px;
  height: 22px;
  margin-left: auto;
  padding: 0 2px 0 5px;
  border: 1px solid;
  border-color: #8a857c #fff #fff #8a857c;
`;

const Clock = styled.time`
  padding-left: 5px;
`;

export default App;
